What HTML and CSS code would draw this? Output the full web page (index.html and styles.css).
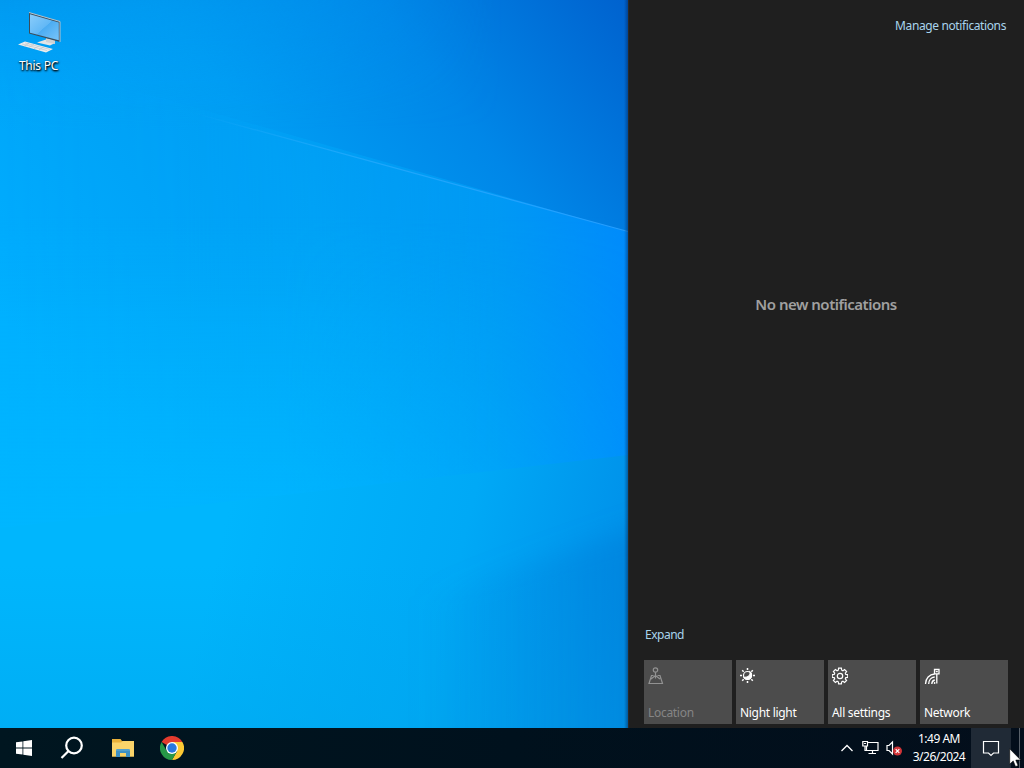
FILE: index.html
```html
<!DOCTYPE html>
<html lang="en">
<head>
    <meta charset="utf-8">
    <title>Desktop</title>
    <link rel="stylesheet" href="styles.css">
</head>
<body>
    <div class="screen">
        <main class="desktop">
            <!-- wallpaper -->
            <svg class="wallpaper" viewBox="0 0 628 728" preserveAspectRatio="none">
                <defs>
                    <linearGradient id="sky" gradientUnits="userSpaceOnUse" x1="80" y1="420" x2="640" y2="0">
                        <stop offset="0" stop-color="#00aeff"/>
                        <stop offset=".45" stop-color="#009df3"/>
                        <stop offset=".7" stop-color="#0087e8"/>
                        <stop offset="1" stop-color="#0060cd"/>
                    </linearGradient>
                    <linearGradient id="beam" x1="0" y1="0" x2="1" y2="0">
                        <stop offset="0" stop-color="#00acff"/>
                        <stop offset=".5" stop-color="#00a7f9"/>
                        <stop offset=".78" stop-color="#009af4"/>
                        <stop offset="1" stop-color="#008bfb"/>
                    </linearGradient>
                    <linearGradient id="glow" x1="0" y1="0" x2="0" y2="1">
                        <stop offset=".1" stop-color="#00b8ff" stop-opacity="0"/>
                        <stop offset="1" stop-color="#00b8ff" stop-opacity=".85"/>
                    </linearGradient>
                    <linearGradient id="topfade" x1="0" y1="0" x2="0" y2="1">
                        <stop offset="0" stop-color="#0096ee" stop-opacity=".75"/>
                        <stop offset="1" stop-color="#00a6fb" stop-opacity="0"/>
                    </linearGradient>
                    <linearGradient id="floor" gradientUnits="userSpaceOnUse" x1="230" y1="500" x2="690" y2="610">
                        <stop offset="0" stop-color="#00b6fd"/>
                        <stop offset=".5" stop-color="#00a9f6"/>
                        <stop offset="1" stop-color="#0086e4"/>
                    </linearGradient>
                    <linearGradient id="floorfade" x1="0" y1="0" x2="0" y2="1">
                        <stop offset=".4" stop-color="#00a6ec" stop-opacity="0"/>
                        <stop offset="1" stop-color="#00a6ec" stop-opacity=".5"/>
                    </linearGradient>
                    <linearGradient id="corner" x1="0" y1="0" x2="1" y2="0">
                        <stop offset="0" stop-color="#007bd6" stop-opacity="0"/>
                        <stop offset="1" stop-color="#007bd6" stop-opacity=".55"/>
                    </linearGradient>
                    <linearGradient id="ray" x1="0" y1="0" x2="1" y2="0">
                        <stop offset="0" stop-color="#2eaeff" stop-opacity="0"/>
                        <stop offset=".35" stop-color="#2eaeff" stop-opacity=".6"/>
                        <stop offset="1" stop-color="#259eff"/>
                    </linearGradient>
                    <linearGradient id="maskfade" x1="0" y1="0" x2="1" y2="0">
                        <stop offset="0" stop-color="#000"/>
                        <stop offset=".3" stop-color="#222"/>
                        <stop offset=".8" stop-color="#fff"/>
                    </linearGradient>
                    <mask id="fadein"><rect width="628" height="728" fill="url(#maskfade)"/></mask>
                    <linearGradient id="leftfade" x1="0" y1="0" x2="1" y2="0">
                        <stop offset="0" stop-color="#fff"/>
                        <stop offset=".8" stop-color="#000"/>
                    </linearGradient>
                    <mask id="fadeout"><rect width="628" height="728" fill="url(#leftfade)"/></mask>
                    <linearGradient id="widefade" x1="0" y1="0" x2="1" y2="0">
                        <stop offset=".45" stop-color="#fff"/>
                        <stop offset="1" stop-color="#333"/>
                    </linearGradient>
                    <mask id="glowmask"><rect width="628" height="728" fill="url(#widefade)"/></mask>
                    <filter id="soft"><feGaussianBlur stdDeviation="12"/></filter>
                </defs>
                <rect width="628" height="728" fill="url(#sky)"/>
                <g mask="url(#fadein)">
                    <path d="M0 52 180 103 628 232V728H0Z" fill="url(#beam)"/>
                </g>
                <rect width="628" height="130" fill="url(#topfade)" mask="url(#fadeout)"/>
                <rect y="180" width="628" height="350" fill="url(#glow)" mask="url(#glowmask)"/>
                <path d="M0 528 628 455V728H0Z" fill="url(#floor)"/>
                <path d="M0 528 628 455V728H0Z" fill="url(#floorfade)"/>
                <path d="M420 600 660 520V770H420Z" fill="url(#corner)" filter="url(#soft)"/>
                <path d="M190 112 628 231.500" fill="none" stroke="url(#ray)" stroke-width="1.200"/>
            </svg>

            <div class="shortcut">
                <svg class="pc-icon" viewBox="0 0 48 44">
                    <defs>
                        <linearGradient id="display" x1="0" y1="0" x2="1" y2="1">
                            <stop offset="0" stop-color="#8bcdfb"/>
                            <stop offset=".5" stop-color="#62b8f6"/>
                            <stop offset=".51" stop-color="#4bacf2"/>
                            <stop offset="1" stop-color="#78c4f9"/>
                        </linearGradient>
                    </defs>
                    <path d="M22 32.500 31 29.500l9 3.500L35 35.500z" fill="#e2e5e6"/>
                    <path d="m31 28 9 2v4l-9-2z" fill="#cdd2d5"/>
                    <path d="M14 2.500 45 11.500V32L14 23.500z" fill="#3b4d5b"/>
                    <path d="M14 2.500 45 11.500V32" fill="none" stroke="#b5c4cf" stroke-width="1"/>
                    <path d="M15 4.200 43.800 12.500V30.300L15 22.700z" fill="url(#display)"/>
                    <path d="M3 34.500 10 31.500l28 7.500-7 3.500z" fill="#ececec"/>
                    <path d="m7 34 25 6.500M10 32.900l25 6.500M9 36.300l5-3m0 4 5-3m0 4.500 5-3m0 4 5-3" stroke="#b3c1c9" stroke-width=".6" fill="none"/>
                </svg>
                <span class="shortcut-label">This PC</span>
            </div>
        </main>

        <aside class="action-center">
            <a class="manage">Manage notifications</a>
            <p class="empty">No new notifications</p>
            <div class="quick">
                <a class="expand">Expand</a>
                <div class="tiles">
                    <div class="tile disabled">
                        <svg viewBox="0 0 16 18" class="tile-icon">
                            <circle cx="7.500" cy="3" r="2.200"/>
                            <path d="M7.500 5.200V11.500M5.500 8.500H3.500L1 16.500h13.500L12 8.500H9.500M3 12l4.500-3.500 4.500 3.500"/>
                        </svg>
                        <span class="tile-text">Location</span>
                    </div>
                    <div class="tile">
                        <svg viewBox="0 0 16 18" class="tile-icon">
                            <circle cx="7.500" cy="8.500" r="4"/>
                            <path d="M10 5c1 3-1.800 5.500-6 5.300 1.500 3 6 2.500 7.200-.3.600-1.800.200-4-1.200-5z" fill="#fff"/>
                            <path d="M7.500 1v2M7.500 14v2M0 8.500h2M13 8.500h2M2.200 3.200l1.500 1.500M11.300 12.300l1.500 1.500M2.200 13.800l1.500-1.500M11.300 4.700l1.500-1.500" stroke-width="1.500"/>
                        </svg>
                        <span class="tile-text">Night light</span>
                    </div>
                    <div class="tile">
                        <svg viewBox="0 0 16 18" class="tile-icon">
                            <path d="M6.600 1.200h2.800l.3 2 1.200.5 1.700-1.200 2 2-1.300 1.700.5 1.200 2 .3v2.600l-2 .3-.5 1.200 1.300 1.700-2 2-1.700-1.200-1.200.5-.3 2H6.600l-.3-2-1.200-.5-1.700 1.200-2-2 1.300-1.700-.5-1.200-2-.3V7.700l2-.3.5-1.200-1.300-1.700 2-2 1.700 1.200 1.200-.5z"/>
                            <circle cx="8" cy="9" r="2.700"/>
                        </svg>
                        <span class="tile-text">All settings</span>
                    </div>
                    <div class="tile">
                        <svg viewBox="0 0 16 18" class="tile-icon">
                            <path d="M1.500 17C1.500 11.500 5.500 7.200 10.500 7M4.700 17c0-4 2.500-6.800 6-7M7.800 17c0-2 1-3.500 3-4" stroke-width="1.300"/>
                            <path d="M12.800 7v9.500M10.500 2.500h4.500v4.300h-4.500zM11.800 4.700h2" stroke-width="1.300"/>
                            <circle cx="10.600" cy="16" r=".9" fill="#fff" stroke="none"/>
                        </svg>
                        <span class="tile-text">Network</span>
                    </div>
                </div>
            </div>
        </aside>

        <footer class="taskbar">
            <div class="apps">
                <div class="app">
                    <svg width="16" height="16" viewBox="0 0 16 16" fill="#fff">
                        <path d="M0 2.300 6.500 1.400V7.600H0zM7.300 1.300 16 0v7.600H7.300zM0 8.400h6.500v6.200L0 13.700zM7.300 8.400H16V16l-8.700-1.300z"/>
                    </svg>
                </div>
                <div class="app">
                    <svg width="24" height="24" viewBox="0 0 24 24" fill="none" stroke="#fff" stroke-width="2.200">
                        <circle cx="14" cy="9.500" r="7.800"/>
                        <path d="M8.300 15.200 1.500 22"/>
                    </svg>
                </div>
                <div class="app explorer">
                    <svg width="22" height="20" viewBox="0 0 22 20">
                        <path d="M0 1h8.500l1.500 2H22v15.500H0z" fill="#e9b13a"/>
                        <path d="M0 4.500h9L11 3h11v15.500H0z" fill="#fad46a"/>
                        <path d="M4 19v-6.500q0-1.500 1.500-1.500h11q1.500 0 1.500 1.500V19h-4v-4H8v4z" fill="#3e91c5"/>
                        <path d="M4 12h14" stroke="#67afd5"/>
                    </svg>
                </div>
                <div class="app chrome">
                    <svg width="24" height="24" viewBox="0 0 24 24">
                        <path d="M12 6h10.400A12 12 0 0 1 12 24l5.200-9z" fill="#fcc934"/>
                        <path d="M1.600 6A12 12 0 0 1 22.400 6H12L6.800 9z" fill="#e33b2e"/>
                        <path d="m1.600 6 5.200 9 10.400 0L12 24A12 12 0 0 1 1.600 6z" fill="#279847"/>
                        <circle cx="12" cy="12" r="6" fill="#fff"/>
                        <circle cx="12" cy="12" r="4.700" fill="#2878e0"/>
                    </svg>
                </div>
            </div>
            <div class="tray">
                <svg class="chevron" width="12" height="8" viewBox="0 0 12 8" fill="none" stroke="#fff" stroke-width="1.300">
                    <path d="m.5 7 5.500-5.500L11.500 7"/>
                </svg>
                <svg class="net" width="17" height="16" viewBox="0 0 17 16" fill="none" stroke="#fff" stroke-width="1.200">
                    <path d="M5.500 2.500h10.500v8H4.500V6.500M10.500 10.500v3M6.500 13.500h7.500M3 6.500v4h2M.8 1.500h4.700V6H.8z"/>
                    <path d="M2 3.500h2"/>
                </svg>
                <svg class="volume" width="17" height="16" viewBox="0 0 17 16" fill="none" stroke="#fff" stroke-width="1.200">
                    <path d="M1 5.500h2L6.500 2v12L3 10.500H1z"/>
                    <circle cx="11.500" cy="11" r="4.500" fill="#d13438" stroke="none"/>
                    <path d="m9.700 9.200 3.600 3.600m0-3.600-3.600 3.600"/>
                </svg>
                <div class="clock">
                    <span class="time">1:49 AM</span>
                    <span class="date">3/26/2024</span>
                </div>
                <div class="notify">
                    <svg width="18" height="18" viewBox="0 0 18 18" fill="none" stroke="#fff" stroke-width="1.200">
                        <path d="M1.500 2.500h15v11.500h-5L9 16.500 6.500 14h-5z"/>
                    </svg>
                </div>
                <div class="show-desktop"></div>
            </div>
        </footer>

        <svg class="cursor" width="14" height="20" viewBox="0 0 14 20">
            <path d="M.7.8v15.400l3.500-3.300 2.300 5.700 2.600-1-2.300-5.500h5z" fill="#fff" stroke="#000" stroke-width=".6"/>
        </svg>
    </div>
</body>
</html>
```

FILE: styles.css
```css
* { box-sizing: border-box; }
body {
    margin: 0;
    font-family: "Noto Sans", "Open Sans", sans-serif;
    font-size: 12px;
    color: #fff;
}
svg { display: block; }
.screen {
    position: relative;
    width: 1024px;
    height: 768px;
    display: grid;
    grid-template-columns: 628px 396px;
    grid-template-rows: 728px 40px;
    overflow: hidden;
}

/* desktop */
.desktop {
    position: relative;
    background: #00a8fb;
}
.desktop::after {
    content: "";
    position: absolute;
    top: 0;
    right: 0;
    width: 4px;
    height: 100%;
    background: linear-gradient(90deg, rgba(0, 30, 80, 0), rgba(0, 30, 80, .45));
}
.wallpaper { position: absolute; inset: 0; width: 100%; height: 100%; }
.shortcut {
    position: relative;
    width: 76px;
    padding-top: 9px;
    display: flex;
    flex-direction: column;
    align-items: center;
}
.pc-icon { width: 48px; height: 46px; margin-left: 2px; }
.shortcut-label {
    margin-left: 1px;
    margin-top: 2px;
    line-height: 17px;
    letter-spacing: -.25px;
    text-shadow: 0 1px 2px #000, 1px 1px 2px #000;
}

/* notification panel */
.action-center {
    display: flex;
    flex-direction: column;
    padding: 17px 16px 4px;
    background: #1f1f1f;
    box-shadow: inset 1px 0 #292929;
}
.manage {
    align-self: flex-end;
    margin-right: 2px;
    line-height: 18px;
    color: #a9d4ec;
    letter-spacing: -.39px;
}
.empty {
    margin: 258px 0 0;
    line-height: 22px;
    text-align: center;
    font-size: 15px;
    font-weight: 600;
    color: #a0a0a0;
    letter-spacing: -.5px;
}
.quick { margin-top: auto; }
.expand {
    display: block;
    margin: 0 0 16px 1px;
    line-height: 18px;
    color: #a9d4ec;
    letter-spacing: -.5px;
}
.tiles {
    display: grid;
    grid-template-columns: repeat(4, 88px);
    gap: 4px;
}
.tile {
    height: 64px;
    padding: 7px 4px 2px;
    display: flex;
    flex-direction: column;
    justify-content: space-between;
    background: #4c4c4c;
}
.tile-icon {
    width: 16px;
    height: 18px;
    fill: none;
    stroke: #fff;
    stroke-width: 1.2;
}
.tile-text { line-height: 18px; letter-spacing: -.3px; white-space: nowrap; }
.disabled { color: #858585; }
.disabled .tile-icon { stroke: #929292; }

/* taskbar */
.taskbar {
    grid-column: 1 / 3;
    display: flex;
    justify-content: space-between;
    background: linear-gradient(90deg, #001620, #00111d 50%, #030e1b);
}
.apps, .tray { display: flex; align-items: center; }
.app {
    width: 48px;
    height: 40px;
    display: flex;
    align-items: center;
    justify-content: center;
}
.explorer { margin-left: 3px; }
.chrome { margin-left: 1px; }
.chevron { margin-right: 9px; }
.net { margin-right: 7px; }
.volume { margin-right: 6px; }
.clock {
    width: 60px;
    margin-right: 2px;
    display: flex;
    flex-direction: column;
    align-items: center;
    line-height: 18px;
    letter-spacing: -.5px;
}
.notify {
    width: 40px;
    height: 40px;
    display: flex;
    align-items: center;
    justify-content: center;
    background: #202a36;
}
.show-desktop {
    width: 5px;
    height: 40px;
    margin-left: 8px;
    border-left: 1px solid #59616a;
}
.cursor { position: absolute; left: 1009px; top: 748px; }
```
